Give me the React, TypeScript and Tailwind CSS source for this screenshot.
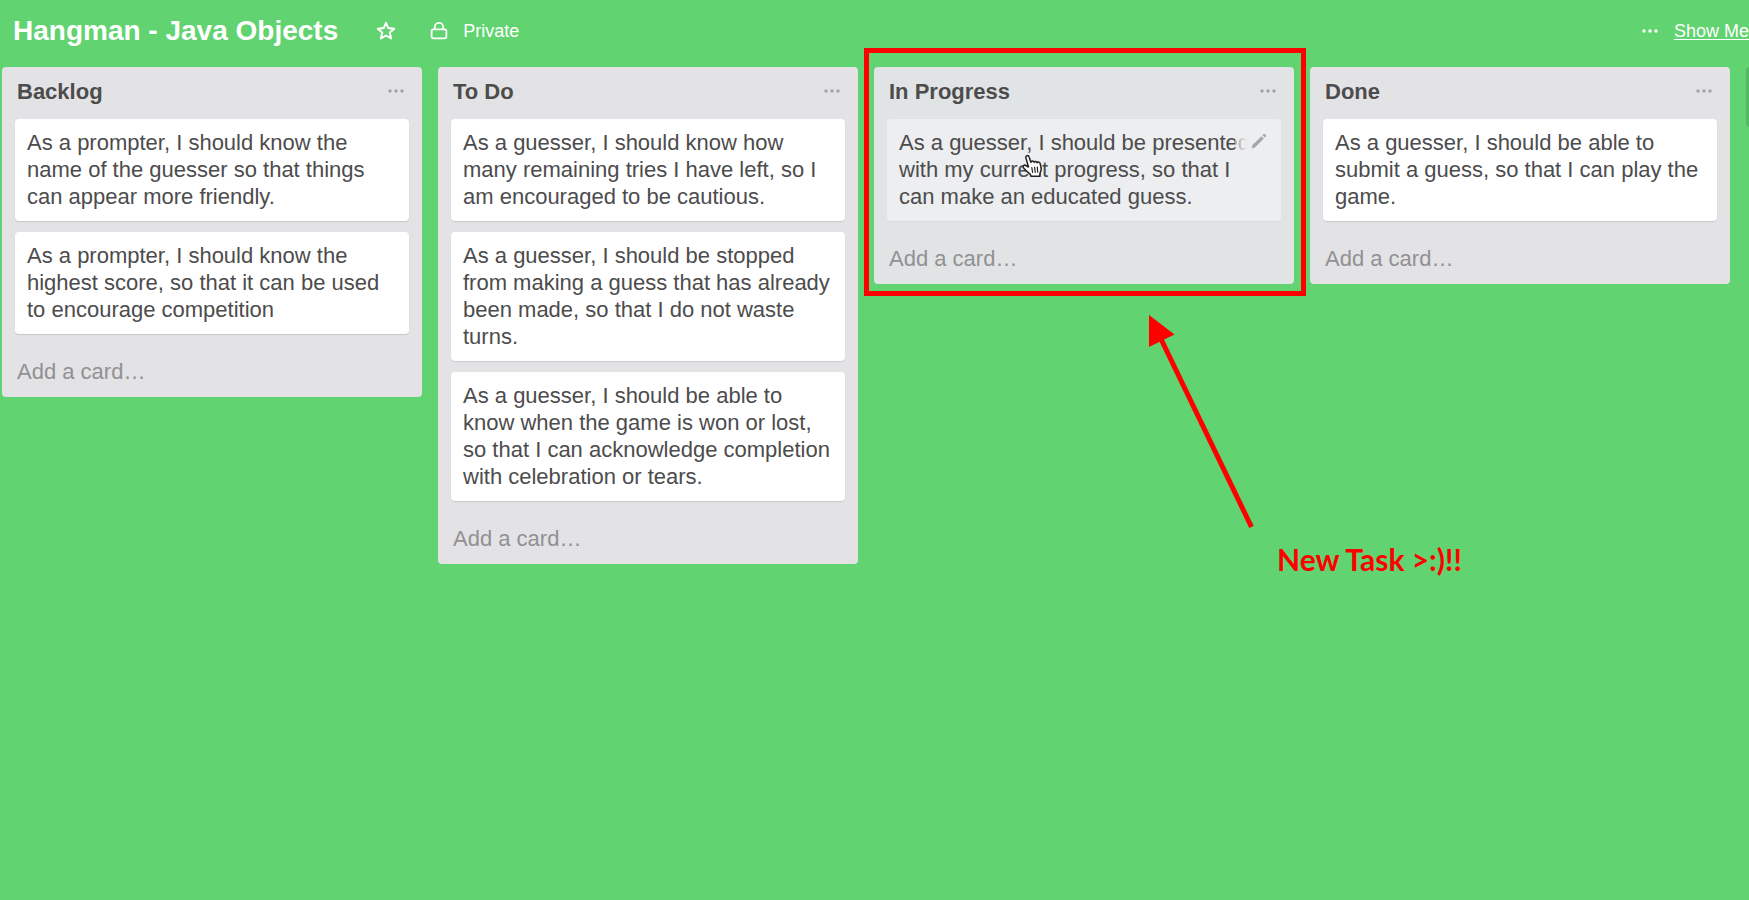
import type { ReactNode } from "react";

type Card = { text: string; hovered?: boolean };
type List = { title: string; cards: Card[]; marked?: boolean };

const lists: List[] = [
  {
    title: "Backlog",
    cards: [
      { text: "As a prompter, I should know the name of the guesser so that things can appear more friendly." },
      { text: "As a prompter, I should know the highest score, so that it can be used to encourage competition" },
    ],
  },
  {
    title: "To Do",
    cards: [
      { text: "As a guesser, I should know how many remaining tries I have left, so I am encouraged to be cautious." },
      { text: "As a guesser, I should be stopped from making a guess that has already been made, so that I do not waste turns." },
      { text: "As a guesser, I should be able to know when the game is won or lost, so that I can acknowledge completion with celebration or tears." },
    ],
  },
  {
    title: "In Progress",
    marked: true,
    cards: [
      { text: "As a guesser, I should be presented with my current progress, so that I can make an educated guess.", hovered: true },
    ],
  },
  {
    title: "Done",
    cards: [{ text: "As a guesser, I should be able to submit a guess, so that I can play the game." }],
  },
];

function Dots() {
  return (
    <svg className="h-1 w-4" viewBox="0 0 16 4" fill="currentColor" aria-hidden="true">
      <circle cx="2" cy="2" r="1.7" />
      <circle cx="8" cy="2" r="1.7" />
      <circle cx="14" cy="2" r="1.7" />
    </svg>
  );
}

function StarIcon() {
  return (
    <svg className="h-5 w-5" viewBox="0 0 20 20" fill="none" stroke="currentColor" strokeWidth="2" strokeLinejoin="round" aria-hidden="true">
      <path d="M10 1.8l2.300 5.300 5.900.6-4.400 3.900 1.300 5.900L10 14.500l-5.100 3 1.300-5.900L1.800 7.700l5.900-.6z" />
    </svg>
  );
}

function LockIcon() {
  return (
    <svg className="h-5 w-5" viewBox="0 0 20 20" fill="none" stroke="currentColor" strokeWidth="1.8" aria-hidden="true">
      <rect x="2.6" y="8.400" width="14.800" height="9" rx="1.8" />
      <path d="M5.800 8.400V6a4.200 4.200 0 0 1 8.400 0v2.400" />
    </svg>
  );
}

function PencilIcon() {
  return (
    <svg className="h-4 w-4" viewBox="0 0 16 16" fill="currentColor" aria-hidden="true">
      <path d="M0.500 15.500l1-3.600L10.500 3.200l2.400 2.400L4 14.500z" />
      <path d="M11.500 2.200l1-1a1 1 0 0 1 1.400 0l1 1a1 1 0 0 1 0 1.400l-1 1z" />
    </svg>
  );
}

function HandCursor() {
  return (
    <svg className="absolute top-[35px] left-[135px] h-6 w-5" viewBox="0 0 20 24" aria-hidden="true">
      <path
        d="M6.500 13L4 4.200C3.300 1.400 6.400.6 7.200 3.200l1.700 5c.4-1.500 2.700-1.500 3.200.1.600-1.300 2.700-1.100 3.100.4.800-1.100 2.700-.7 3 .9l.9 4.400c.4 2-.3 3.600-1.100 5l-.3 3.300H9l-.6-1.900C6.500 18.900 3.500 16.500 1.600 14c-1.300-1.700.5-3.600 2.300-2.500z"
        fill="#fff"
        stroke="#222"
        strokeWidth="1.500"
        strokeLinejoin="round"
      />
      <path d="M9.800 13.500l.8 5M12.600 13.300l.6 5M15.300 13.100l.4 5" stroke="#222" strokeWidth="1.200" strokeLinecap="round" />
    </svg>
  );
}

function CardItem({ text, hovered }: Card) {
  if (!hovered) {
    return (
      <li className="rounded-[4px] bg-white px-3 pt-[10px] pb-[11px] shadow-[0_1px_1px_#c8c8ca]">{text}</li>
    );
  }
  return (
    <li className="relative rounded-[4px] bg-[#eceef0] px-3 pt-[10px] pb-[11px] shadow-[0_1px_1px_#dadcdd]">
      {text}
      <button
        type="button"
        aria-label="Edit card"
        className="absolute top-[10px] right-[14px] flex h-6 w-8 items-center justify-end bg-linear-to-r from-[#eceef0]/50 to-[#eceef0] to-40% text-[#a5a7a8]"
      >
        <PencilIcon />
      </button>
      <HandCursor />
    </li>
  );
}

function Annotation({ children }: { children: ReactNode }) {
  return (
    <>
      <div className="pointer-events-none absolute -top-[19px] -right-3 -bottom-3 -left-[10px] border-5 border-[#ff0000]" />
      <svg className="pointer-events-none absolute top-[248px] left-[275px] h-[214px] w-[106px]" viewBox="0 0 106 214" aria-hidden="true">
        <path d="M12 24L102.500 212" stroke="#ff0000" strokeWidth="5" />
        <path d="M0 0L25.500 19.500L0 32z" fill="#ff0000" />
      </svg>
      <p className="absolute top-[474px] left-[403px] font-[Lato,sans-serif] text-[30px] leading-9 font-bold whitespace-nowrap text-[#ff0000]">
        {children}
      </p>
    </>
  );
}

function ListColumn({ title, cards, marked }: List) {
  return (
    <section
      className={
        marked
          ? "relative w-[420px] shrink-0 rounded-[4px] bg-[#e1e4e5]"
          : "w-[420px] shrink-0 rounded-[4px] bg-[#e3e2e4]"
      }
    >
      <header className="flex h-[52px] items-center justify-between pr-[18px] pb-1 pl-[15px]">
        <h2 className="font-bold text-[#4c4c4d]">{title}</h2>
        <button type="button" aria-label={`${title} list actions`} className="text-[#a3a3a5]">
          <Dots />
        </button>
      </header>
      <ul className="flex flex-col gap-[11px] px-[13px]">
        {cards.map((card) => (
          <CardItem key={card.text} {...card} />
        ))}
      </ul>
      <button type="button" className="block h-[63px] w-full pt-3 pl-[15px] text-left text-[#919193]">
        Add a card…
      </button>
      {marked && <Annotation>New Task &gt;:)!!</Annotation>}
    </section>
  );
}

export default function App() {
  return (
    <div className="min-h-screen overflow-hidden bg-[#61d371] font-['Liberation_Sans',Arial,sans-serif] text-[22px] leading-[27px] text-[#4c4c4d]">
      <header className="-mr-5 flex h-[67px] items-center pb-[6px] pl-[13px] text-lg text-white">
        <h1 className="text-[28px] leading-9 font-bold">Hangman - Java Objects</h1>
        <button type="button" aria-label="Star board" className="ml-[38px]">
          <StarIcon />
        </button>
        <button type="button" className="ml-[33px] flex items-center gap-[14px]">
          <LockIcon />
          Private
        </button>
        <a href="#menu" className="ml-auto flex items-center gap-4">
          <Dots />
          <span className="underline underline-offset-2">Show Menu</span>
        </a>
      </header>
      <main className="flex items-start gap-4 pl-0.5">
        {lists.map((list) => (
          <ListColumn key={list.title} {...list} />
        ))}
        <button type="button" aria-label="Add a list" className="h-[60px] w-[420px] shrink-0 rounded-[4px] bg-[#53bb62]" />
      </main>
    </div>
  );
}
